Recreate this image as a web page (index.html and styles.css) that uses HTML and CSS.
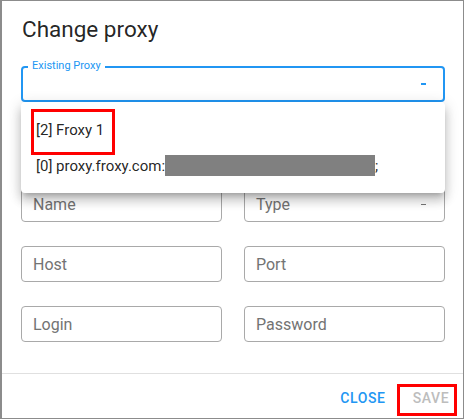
FILE: index.html
```html
<!DOCTYPE html>
<html>
<head>
<meta charset="utf-8">
<link rel="stylesheet" href="styles.css">
</head>
<body>
<div class="dialog">
  <h2 class="title">Change proxy</h2>
  <div class="body">
    <div class="field field-focused">
      <span class="legend">Existing Proxy</span>
      <span class="caret caret-blue"></span>
    </div>
    <div class="grid">
      <div class="field"><span class="ph">Name</span></div>
      <div class="field"><span class="ph">Type</span><span class="caret"></span></div>
      <div class="field"><span class="ph">Host</span></div>
      <div class="field"><span class="ph">Port</span></div>
      <div class="field"><span class="ph">Login</span></div>
      <div class="field"><span class="ph">Password</span></div>
    </div>
  </div>
  <div class="actions">
    <button class="btn btn-primary">Close</button>
    <button class="btn btn-disabled">Save</button>
  </div>

  <ul class="menu">
    <li class="menu-item">[2] Froxy 1</li>
    <li class="menu-item">[0] proxy.froxy.com:<span class="redact"></span>;</li>
  </ul>
  <div class="mark mark-item"></div>
  <div class="mark mark-save"></div>
</div>
</body>
</html>
```
FILE: styles.css
```css
html, body {
  margin: 0;
  padding: 0;
  background: #fff;
}

.dialog {
  position: relative;
  width: 464px;
  height: 419px;
  box-sizing: border-box;
  border: 1px solid #8c8c8c;
  border-left-width: 2px;
  display: flex;
  flex-direction: column;
  font-family: Roboto, "Liberation Sans", sans-serif;
  background: #fff;
  overflow: hidden;
}

.title {
  margin: 0;
  padding: 12px 0 0 20px;
  font-size: 22.5px;
  font-weight: 400;
  line-height: 32px;
  color: rgba(0, 0, 0, 0.87);
}

.body {
  flex: 1;
  padding: 21px 18px 0 19px;
  display: flex;
  flex-direction: column;
}

.field {
  position: relative;
  height: 36px;
  box-sizing: border-box;
  border: 1px solid #a9a9a9;
  border-radius: 4px;
  display: flex;
  align-items: center;
  padding: 0 12px 0 11px;
}

.field-focused {
  border: 2px solid #2196f3;
  padding: 0 11px 0 10px;
}

.legend {
  position: absolute;
  left: 5px;
  top: -9px;
  padding: 0 4px;
  background: #fff;
  font-size: 11px;
  line-height: 14px;
  color: #2196f3;
}

.ph {
  font-size: 16px;
  color: #737373;
}

.caret {
  margin-left: auto;
  margin-right: 6px;
  width: 5px;
  height: 1px;
  background: #777;
}

.caret-blue {
  height: 2px;
  background: #2196f3;
}

.grid {
  margin-top: 84px;
  display: grid;
  grid-template-columns: 201px 201px;
  column-gap: 22px;
  row-gap: 24px;
}

.actions {
  height: 40px;
  padding-top: 4px;
  border-top: 1px solid #e0e0e0;
  display: flex;
  justify-content: flex-end;
  align-items: center;
  gap: 4px;
}

.btn {
  width: 64px;
  height: 36px;
  padding: 0;
  border: 0;
  background: transparent;
  font-family: Roboto, "Liberation Sans", sans-serif;
  font-size: 14px;
  font-weight: 500;
  letter-spacing: 0.6px;
  text-transform: uppercase;
  text-align: center;
}

.btn-primary {
  color: #2196f3;
}

.btn-disabled {
  color: #bdbdbd;
}

.menu {
  position: absolute;
  top: 101px;
  left: 19px;
  width: 424px;
  margin: 0;
  padding: 10px 0 9px;
  list-style: none;
  background: #fff;
  border-radius: 4px;
  box-shadow: 0 5px 5px -3px rgba(0, 0, 0, 0.2), 0 8px 10px 1px rgba(0, 0, 0, 0.14), 0 3px 14px 2px rgba(0, 0, 0, 0.12);
}

.menu-item {
  height: 36px;
  line-height: 36px;
  padding-left: 15px;
  font-size: 15px;
  color: rgba(0, 0, 0, 0.87);
  white-space: nowrap;
}

.redact {
  display: inline-block;
  width: 210px;
  height: 21px;
  background: #808080;
  vertical-align: -5px;
}

.mark {
  position: absolute;
  box-sizing: border-box;
  border: 3px solid #ff0000;
}

.mark-item {
  left: 29px;
  top: 108px;
  width: 84px;
  height: 46px;
}

.mark-save {
  left: 395px;
  top: 383px;
  width: 60px;
  height: 32px;
}
```
